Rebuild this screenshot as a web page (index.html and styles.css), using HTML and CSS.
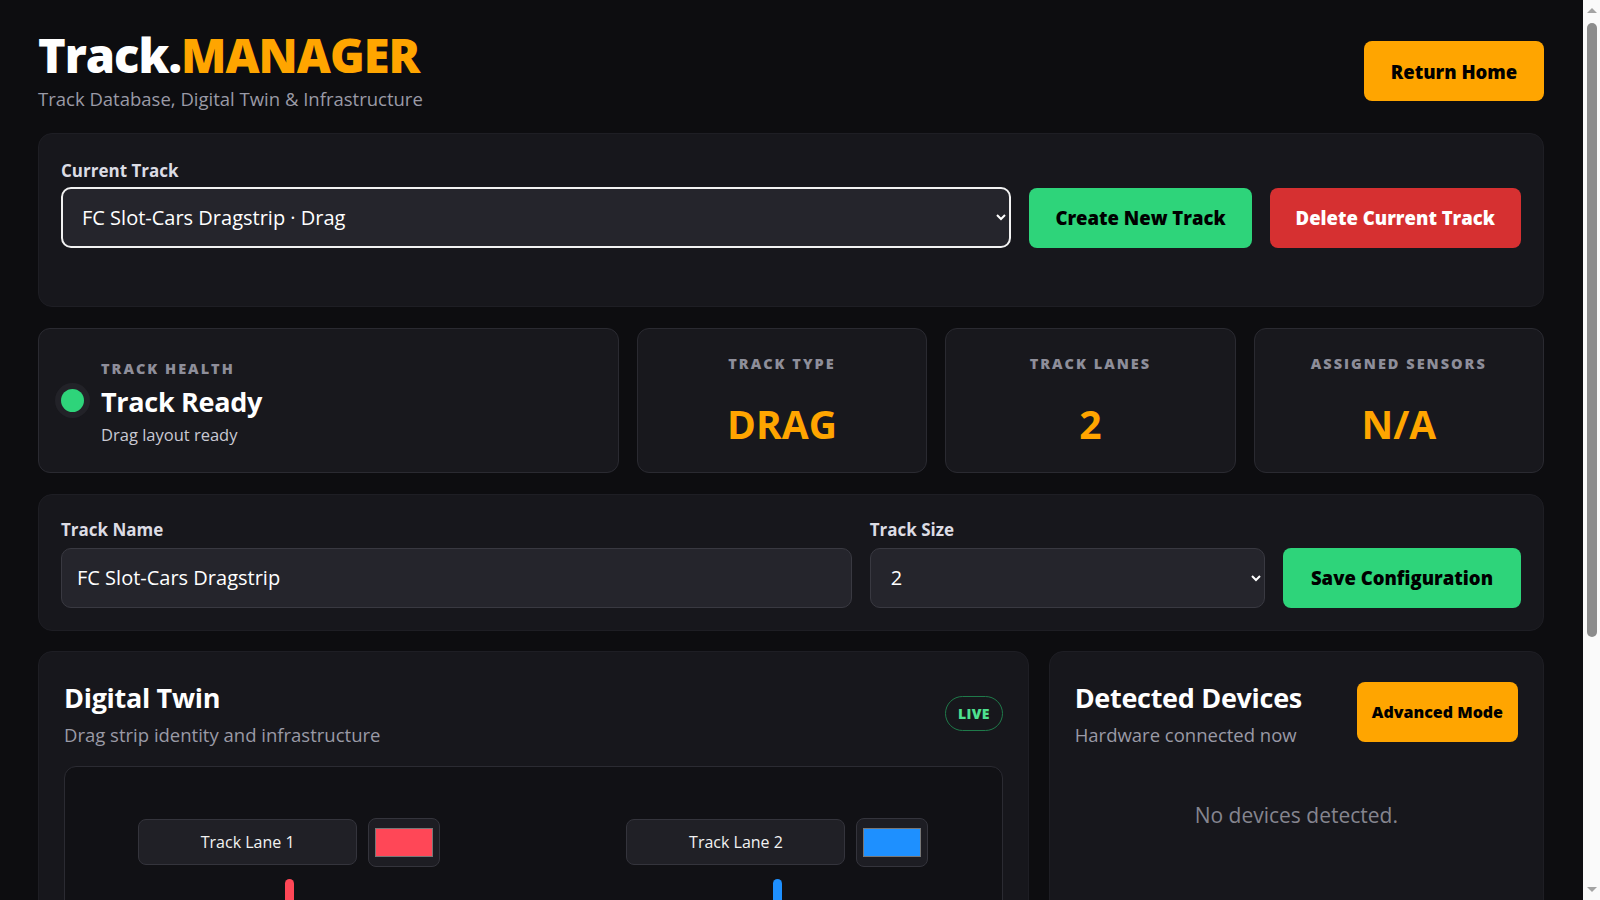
FILE: index.html
```html
<!DOCTYPE html>
<html lang="en">
<head>
<meta charset="UTF-8">
<meta name="viewport" content="width=device-width, initial-scale=1.0">
<title>Track Manager</title>
<link rel="stylesheet" href="styles.css">
</head>
<body>

<header class="page-header">
    <div class="brand">
        <h1>Track.<span>MANAGER</span></h1>
        <p>Track Database, Digital Twin &amp; Infrastructure</p>
    </div>
    <button class="btn btn-orange btn-home">Return Home</button>
</header>

<section class="panel track-picker">
    <label class="field-label" for="currentTrack">Current Track</label>
    <div class="picker-row">
        <select id="currentTrack" class="select select-current">
            <option>FC Slot-Cars Dragstrip · Drag</option>
        </select>
        <button class="btn btn-green">Create New Track</button>
        <button class="btn btn-red">Delete Current Track</button>
    </div>
    <div class="track-message" id="trackMessage"></div>
</section>

<section class="stats">
    <div class="stat-card health-card">
        <span class="health-dot"></span>
        <div class="health-text">
            <div class="stat-label">Track Health</div>
            <div class="health-title">Track Ready</div>
            <div class="health-sub">Drag layout ready</div>
        </div>
    </div>
    <div class="stat-card">
        <div class="stat-label">Track Type</div>
        <div class="stat-value">DRAG</div>
    </div>
    <div class="stat-card">
        <div class="stat-label">Track Lanes</div>
        <div class="stat-value">2</div>
    </div>
    <div class="stat-card">
        <div class="stat-label">Assigned Sensors</div>
        <div class="stat-value">N/A</div>
    </div>
</section>

<section class="panel config">
    <div class="field">
        <label class="field-label" for="trackName">Track Name</label>
        <input type="text" id="trackName" class="input" value="FC Slot-Cars Dragstrip">
    </div>
    <div class="field">
        <label class="field-label" for="trackSize">Track Size</label>
        <select id="trackSize" class="select">
            <option>1</option>
            <option selected>2</option>
            <option>3</option>
            <option>4</option>
        </select>
    </div>
    <button class="btn btn-green btn-save">Save Configuration</button>
</section>

<div class="bottom-row">
    <section class="panel card-panel">
        <div class="card-head">
            <div>
                <h2>Digital Twin</h2>
                <p class="card-sub">Drag strip identity and infrastructure</p>
            </div>
            <span class="live-badge">LIVE</span>
        </div>
        <div class="twin">
            <div class="lane">
                <div class="lane-head">
                    <div class="lane-name">Track Lane 1</div>
                    <div class="lane-color"><span class="swatch swatch-red"></span></div>
                </div>
                <div class="lane-line line-red"></div>
            </div>
            <div class="lane">
                <div class="lane-head">
                    <div class="lane-name">Track Lane 2</div>
                    <div class="lane-color"><span class="swatch swatch-blue"></span></div>
                </div>
                <div class="lane-line line-blue"></div>
            </div>
        </div>
    </section>

    <section class="panel card-panel">
        <div class="card-head">
            <div>
                <h2>Detected Devices</h2>
                <p class="card-sub">Hardware connected now</p>
            </div>
            <button class="btn btn-orange btn-small">Advanced Mode</button>
        </div>
        <p class="empty">No devices detected.</p>
    </section>
</div>

<!-- window scrollbar, as in the captured browser -->
<div class="scrollbar" aria-hidden="true">
    <span class="sb-arrow sb-up"></span>
    <span class="sb-thumb"></span>
    <span class="sb-arrow sb-down"></span>
</div>

</body>
</html>
```

FILE: styles.css
```css
body {
    margin: 0;
    padding: 28px 56px 40px 38px; /* right side leaves room for the scrollbar */
    background: #0d0d10;
    color: #fff;
    font-family: "Open Sans", "Noto Sans", sans-serif;
}

/* header */
.page-header {
    display: flex;
    justify-content: space-between;
    align-items: center;
    margin-bottom: 21px;
}
.brand h1 {
    margin: 0;
    font-size: 47px;
    font-weight: 800;
    line-height: 54px;
    letter-spacing: -1px;
}
.brand h1 span {
    color: #ffa500;
}
.brand p {
    margin: 4px 0 0;
    font-size: 18.5px;
    line-height: 26px;
    color: #9a9aa6;
}

/* buttons */
.btn {
    height: 60px;
    padding: 0 26px;
    border: none;
    border-radius: 8px;
    font-family: inherit;
    font-size: 18.5px;
    font-weight: 800;
    cursor: pointer;
    white-space: nowrap;
}
.btn-orange {
    background: #ffa500;
    color: #000;
}
.btn-green {
    background: #2ed47a;
    color: #000;
}
.btn-red {
    background: #d63031;
    color: #fff;
}
.btn-home {
    width: 180px;
    margin-top: 2px;
}
.btn-save {
    width: 238px;
}
.btn-small {
    font-size: 16px;
    padding: 0 15px;
}

/* panels */
.panel {
    background: #17171c;
    border: 1px solid #1e1e24;
    border-radius: 14px;
    padding: 24px 22px 22px;
}
.track-picker {
    padding-top: 26px;
}
.field-label {
    display: block;
    margin-bottom: 7px;
    font-size: 17px;
    font-weight: 700;
    line-height: 22px;
    color: #dcdce4;
}
.track-picker .field-label {
    margin-bottom: 5px;
}
.picker-row {
    display: grid;
    grid-template-columns: 1fr auto auto;
    gap: 18px;
    align-items: center;
}
.select,
.input {
    width: 100%;
    height: 60px;
    box-sizing: border-box;
    background: #25252c;
    color: #fff;
    border: 1px solid #393941;
    border-radius: 10px;
    font-family: inherit;
    font-size: 20px;
    padding: 0 15px;
}
.select-current {
    height: 61px;
    border: 2px solid #f2f2f2;
    padding-left: 15px;
}
.track-message {
    min-height: 36px;
}

/* stats */
.stats {
    display: grid;
    grid-template-columns: 2fr 1fr 1fr 1fr;
    gap: 18px;
    margin: 21px 0 21px;
}
.stat-card {
    background: #18181d;
    border: 1px solid #2a2a31;
    border-radius: 12px;
    padding: 25px 20px 25px;
    text-align: center;
}
.stat-label {
    font-size: 14.5px;
    font-weight: 800;
    line-height: 19.5px;
    letter-spacing: 2px;
    text-transform: uppercase;
    color: #8e8e9a;
}
.stat-value {
    margin-top: 26px;
    font-size: 39px;
    font-weight: 700;
    line-height: 47px;
    color: #ffa500;
}
.health-card {
    display: flex;
    align-items: center;
    gap: 17px;
    padding-left: 22px;
    text-align: left;
}
.health-dot {
    width: 23px;
    height: 23px;
    border-radius: 50%;
    background: #2ed47a;
    box-shadow: 0 0 0 6px #222228;
    flex: none;
}
.health-text {
    padding-top: 4px;
}
.health-title {
    margin-top: 7px;
    font-size: 27px;
    font-weight: 700;
    line-height: 34px;
    letter-spacing: -0.3px;
}
.health-sub {
    margin-top: 5px;
    font-size: 16.5px;
    line-height: 22px;
    color: #c9c9d3;
}

/* config */
.config {
    display: grid;
    grid-template-columns: 2fr 1fr auto;
    gap: 18px;
    align-items: end;
}
.config .select {
    padding-left: 16px;
}

/* bottom cards */
.bottom-row {
    display: grid;
    grid-template-columns: 2fr 1fr;
    gap: 20px;
    margin-top: 20px;
}
.card-panel {
    padding: 30px 25px 28px;
}
.card-head {
    display: flex;
    justify-content: space-between;
    align-items: flex-start;
}
.card-head h2 {
    margin: 0;
    font-size: 27px;
    font-weight: 700;
    line-height: 32px;
    letter-spacing: -0.3px;
}
.card-sub {
    margin: 8px 0 0;
    font-size: 18.5px;
    line-height: 26px;
    color: #9a9aa6;
}
.live-badge {
    margin-top: 14px;
    padding: 0 12px;
    height: 33px;
    line-height: 33px;
    border: 1px solid #1f7a4a;
    border-radius: 18px;
    color: #4ee08f;
    font-size: 14px;
    font-weight: 800;
    letter-spacing: 0.3px;
}
.twin {
    display: grid;
    grid-template-columns: 1fr 1fr;
    gap: 120px;
    margin-top: 18px;
    height: 420px;
    padding: 51px 40px 0;
    background: #111115;
    border: 1px solid #2b2b32;
    border-radius: 12px;
    overflow: hidden;
}
.lane {
    display: flex;
    flex-direction: column;
    align-items: center;
}
.lane-head {
    display: flex;
    align-items: center;
    gap: 11px;
}
.lane-name {
    width: 217px;
    height: 44px;
    line-height: 44px;
    text-align: center;
    background: #202026;
    border: 1px solid #34343c;
    border-radius: 8px;
    font-size: 16px;
    color: #f2f2f2;
}
.lane-color {
    display: flex;
    align-items: center;
    justify-content: center;
    width: 70px;
    height: 47px;
    background: #1d1d23;
    border: 1px solid #34343c;
    border-radius: 8px;
}
.swatch {
    width: 56px;
    height: 27px;
    border: 1px solid #777;
}
.swatch-red {
    background: #ff4757;
}
.swatch-blue {
    background: #1e90ff;
}
.lane-line {
    width: 9px;
    flex: 1;
    margin-top: 12px;
    border-radius: 5px 5px 0 0;
}
.line-red {
    background: #ff4757;
}
.line-blue {
    background: #1e90ff;
}
.empty {
    margin: 53px 0 0;
    text-align: center;
    font-size: 21px;
    line-height: 29px;
    color: #85858f;
}

/* scrollbar */
.scrollbar {
    position: fixed;
    top: 0;
    right: 0;
    width: 17px;
    height: 100vh;
    background: #fafafa;
    display: flex;
    flex-direction: column;
    align-items: center;
}
.sb-arrow {
    width: 0;
    height: 0;
    border-left: 5px solid transparent;
    border-right: 5px solid transparent;
}
.sb-up {
    margin-top: 8px;
    border-bottom: 5px solid #a3a3a3;
}
.sb-down {
    margin-top: auto;
    margin-bottom: 8px;
    border-top: 5px solid #a3a3a3;
}
.sb-thumb {
    width: 10px;
    height: 614px;
    margin-top: 10px;
    border-radius: 5px;
    background: #8c8c8c;
}
```
